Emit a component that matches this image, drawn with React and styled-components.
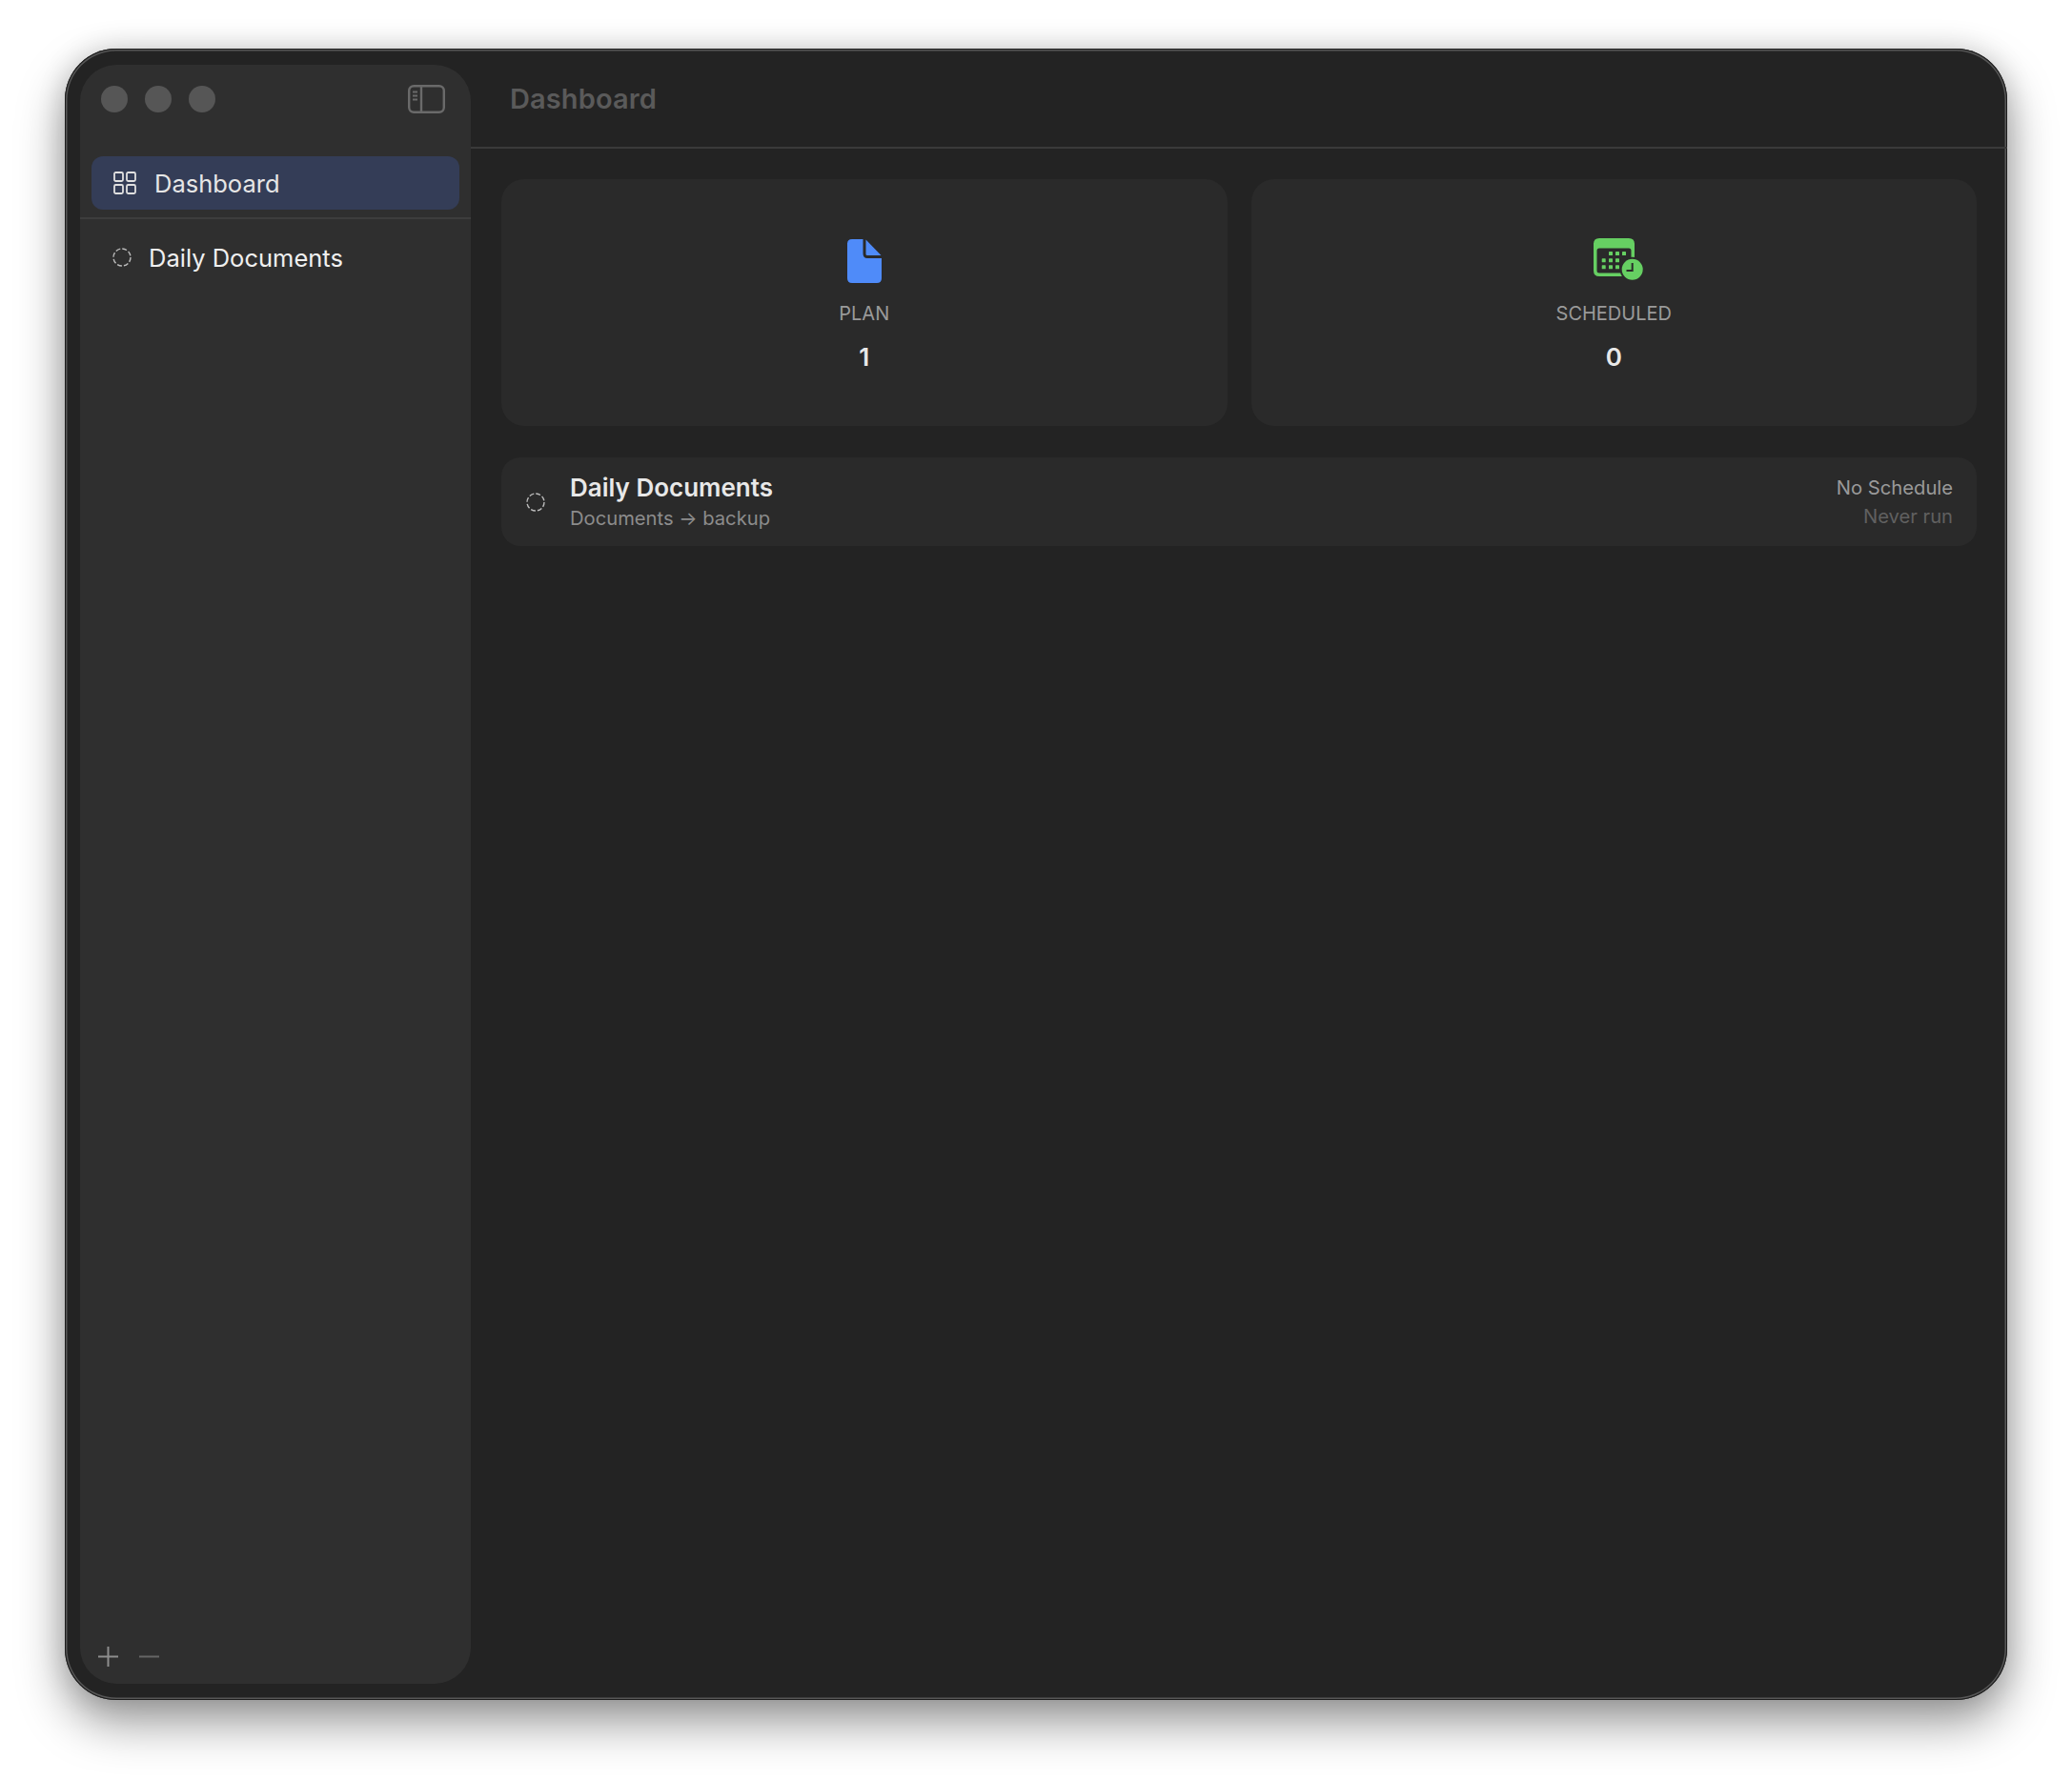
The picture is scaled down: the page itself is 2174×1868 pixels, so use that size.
import React from 'react';
import styled, { createGlobalStyle } from 'styled-components';

const GlobalStyle = createGlobalStyle`
  html, body {
    margin: 0;
    padding: 0;
    background: #ffffff;
  }
  body {
    font-family: Inter, "Liberation Sans", sans-serif;
  }
`;

const Page = styled.div`
  width: 2174px;
  height: 1868px;
  box-sizing: border-box;
  padding: 51px 68px 84px;
`;

const Window = styled.div`
  display: flex;
  height: 100%;
  box-sizing: border-box;
  padding-left: 16px;
  background: #232323;
  border-radius: 54px;
  box-shadow:
    inset 0 0 0 1px #1c1c1c,
    inset 0 0 0 2.5px #565656,
    0 24px 50px rgba(0, 0, 0, 0.4),
    0 0 30px rgba(0, 0, 0, 0.14);
`;

const Sidebar = styled.aside`
  display: flex;
  flex-direction: column;
  width: 410px;
  margin: 17px 0;
  background: #2f2f2f;
  border-radius: 38px;
`;

const TitleBar = styled.div`
  display: flex;
  align-items: center;
  height: 72px;
  padding: 0 27px 0 22px;
`;

const Lights = styled.div`
  display: flex;
  gap: 18px;
  margin-right: auto;
`;

const Light = styled.span`
  width: 28px;
  height: 28px;
  border-radius: 50%;
  background: #565656;
`;

const Nav = styled.nav`
  padding: 24px 12px 8px;
  border-bottom: 2px solid #3d3d3d;
`;

const NavItem = styled.div`
  display: flex;
  align-items: center;
  gap: 19px;
  height: 56px;
  padding-left: 23px;
  background: #343d57;
  border-radius: 12px;
  color: #e6e6e6;
  font-size: 25.5px;
`;

const PlanItem = styled.div`
  display: flex;
  align-items: center;
  gap: 18px;
  height: 56px;
  margin-top: 12px;
  padding-left: 34px;
  color: #f0f0f0;
  font-size: 25.5px;
`;

const SidebarFooter = styled.div`
  display: flex;
  align-items: center;
  gap: 22px;
  margin-top: auto;
  padding: 0 0 18px 19px;
`;

const Main = styled.main`
  flex: 1;
  display: flex;
  flex-direction: column;
  min-width: 0;
`;

const Header = styled.header`
  display: flex;
  align-items: center;
  height: 105px;
  box-sizing: border-box;
  padding: 1px 41px 0;
  border-bottom: 2px solid #3a3a3a;
`;

const Title = styled.h1`
  margin: 0;
  color: #5a5a5a;
  font-size: 29px;
  font-weight: 600;
  letter-spacing: 0.1px;
`;

const Content = styled.div`
  display: flex;
  flex-direction: column;
  gap: 33px;
  padding: 32px 32px 0;
`;

const Cards = styled.div`
  display: grid;
  grid-template-columns: 1fr 1fr;
  gap: 25px;
`;

const Card = styled.section`
  display: flex;
  flex-direction: column;
  align-items: center;
  height: 259px;
  box-sizing: border-box;
  padding-top: ${(p) => p.$top}px;
  background: #2a2a2a;
  border-radius: 24px;
`;

const CardLabel = styled.div`
  margin-top: ${(p) => p.$gap}px;
  color: #9a9a9a;
  font-size: 20px;
  line-height: 24px;
`;

const CardValue = styled.div`
  margin-top: 18px;
  color: #e8e8e8;
  font-size: 26px;
  font-weight: 600;
  line-height: 32px;
`;

const CalendarSlot = styled.div`
  margin-left: 10px;
  height: 44px;
`;

const PlanRow = styled.section`
  display: flex;
  align-items: center;
  height: 93px;
  box-sizing: border-box;
  padding: 0 25px 0 26px;
  background: #2a2a2a;
  border-radius: 20px;
`;

const PlanInfo = styled.div`
  margin-left: 26px;
  margin-right: auto;
`;

const PlanName = styled.div`
  color: #e8e8e8;
  font-size: 26px;
  font-weight: 600;
  line-height: 34px;
`;

const PlanPath = styled.div`
  color: #8c8c8c;
  font-size: 20.2px;
  line-height: 30px;
`;

const PlanStatus = styled.div`
  text-align: right;
  font-size: 20.2px;
  line-height: 30px;
`;

const StatusLine = styled.div`
  color: ${(p) => p.$color};
`;

const DashedCircle = () => (
  <svg width="20" height="20" viewBox="0 0 20 20" fill="none">
    <circle cx="10" cy="10" r="9" stroke="#bdbdbd" strokeWidth="1.4" strokeDasharray="5 2.07" />
  </svg>
);

const GridIcon = () => (
  <svg width="24" height="24" viewBox="0 0 24 24" fill="none" stroke="#e0e0e0" strokeWidth="1.8">
    <rect x="1" y="1" width="9" height="9" rx="1.5" />
    <rect x="14" y="1" width="9" height="9" rx="1.5" />
    <rect x="1" y="14" width="9" height="9" rx="1.5" />
    <rect x="14" y="14" width="9" height="9" rx="1.5" />
  </svg>
);

const SidebarToggle = () => (
  <svg width="39" height="30" viewBox="0 0 39 30" fill="none" stroke="#6a6a6a" strokeWidth="2.4">
    <rect x="1.2" y="1.2" width="36.6" height="27.6" rx="5" />
    <path d="M14 1.2V28.8" />
    <path d="M5 7.5H10M5 11.5H10M5 15.5H10" strokeWidth="1.8" />
  </svg>
);

const PlusIcon = () => (
  <svg width="21" height="21" viewBox="0 0 21 21" stroke="#8e8e8e" strokeWidth="2">
    <path d="M0 10.5H21M10.5 0V21" />
  </svg>
);

const MinusIcon = () => (
  <svg width="21" height="21" viewBox="0 0 21 21" stroke="#666666" strokeWidth="2">
    <path d="M0 10.5H21" />
  </svg>
);

const DocIcon = () => (
  <svg width="36" height="46" viewBox="0 0 36 46" fill="#4f8bf9">
    <path d="M5 0H16.5V15Q16.5 20 21 20H36V41Q36 46 31 46H5Q0 46 0 41V5Q0 0 5 0Z" />
    <path d="M19.5 0.5L35.5 17H21Q19.5 17 19.5 15.5Z" />
  </svg>
);

const calendarDots = [
  [18, 16], [25, 16], [32, 16],
  [10.7, 23.3], [18, 23.3], [25, 23.3],
  [10.7, 30.3], [18, 30.3], [25, 30.3],
];

const CalendarIcon = () => (
  <svg width="52" height="44" viewBox="0 0 52 44" fill="#66cf62">
    <path
      fillRule="evenodd"
      d="M6 0H37Q43 0 43 6V34Q43 40 37 40H6Q0 40 0 34V6Q0 0 6 0ZM6 10.5Q3.5 10.5 3.5 13V34Q3.5 36.5 6 36.5H37Q39.5 36.5 39.5 34V13Q39.5 10.5 37 10.5Z"
    />
    {calendarDots.map(([x, y]) => (
      <rect key={`${x}-${y}`} x={x - 2} y={y - 2} width="4" height="4" rx="0.6" />
    ))}
    <circle cx="40.7" cy="32.7" r="13" fill="#2a2a2a" />
    <circle cx="40.7" cy="32.7" r="11" />
    <path d="M40.7 26V34H34.5" fill="none" stroke="#2a2a2a" strokeWidth="2" />
  </svg>
);

export default function App() {
  return (
    <Page>
      <GlobalStyle />
      <Window>
        <Sidebar>
          <TitleBar>
            <Lights>
              <Light />
              <Light />
              <Light />
            </Lights>
            <SidebarToggle />
          </TitleBar>
          <Nav>
            <NavItem>
              <GridIcon />
              Dashboard
            </NavItem>
          </Nav>
          <PlanItem>
            <DashedCircle />
            Daily Documents
          </PlanItem>
          <SidebarFooter>
            <PlusIcon />
            <MinusIcon />
          </SidebarFooter>
        </Sidebar>
        <Main>
          <Header>
            <Title>Dashboard</Title>
          </Header>
          <Content>
            <Cards>
              <Card $top={63}>
                <DocIcon />
                <CardLabel $gap={20}>PLAN</CardLabel>
                <CardValue>1</CardValue>
              </Card>
              <Card $top={62}>
                <CalendarSlot>
                  <CalendarIcon />
                </CalendarSlot>
                <CardLabel $gap={23}>SCHEDULED</CardLabel>
                <CardValue>0</CardValue>
              </Card>
            </Cards>
            <PlanRow>
              <DashedCircle />
              <PlanInfo>
                <PlanName>Daily Documents</PlanName>
                <PlanPath>Documents → backup</PlanPath>
              </PlanInfo>
              <PlanStatus>
                <StatusLine $color="#9a9a9a">No Schedule</StatusLine>
                <StatusLine $color="#606060">Never run</StatusLine>
              </PlanStatus>
            </PlanRow>
          </Content>
        </Main>
      </Window>
    </Page>
  );
}
